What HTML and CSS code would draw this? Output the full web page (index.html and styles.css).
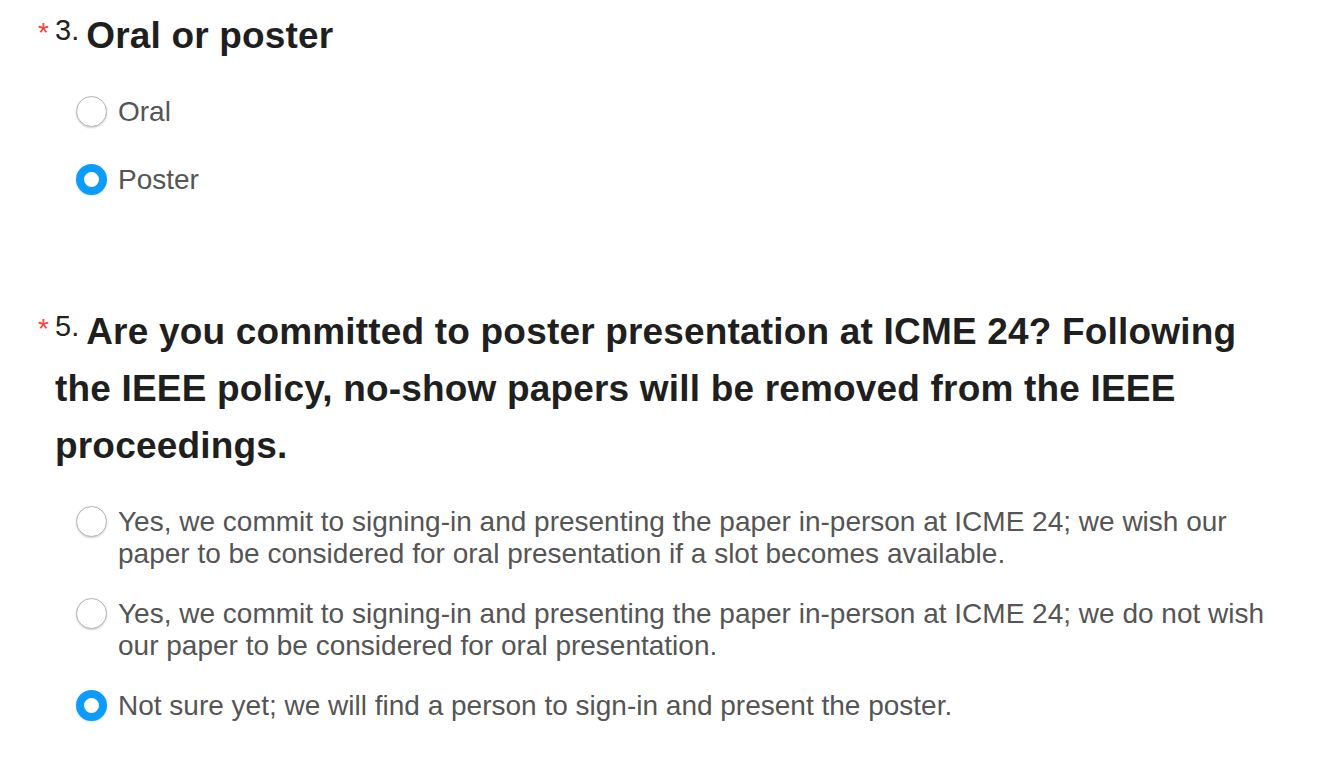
FILE: index.html
```html
<!DOCTYPE html>
<html>
<head>
<meta charset="utf-8">
<link rel="stylesheet" href="styles.css">
</head>
<body>
<div class="question q3">
  <div class="qtitle"><span class="req">*</span><span class="num">3.</span><span class="text">Oral or poster</span></div>
  <div class="options">
    <label class="opt"><span class="radio"></span><span class="label">Oral</span></label>
    <label class="opt"><span class="radio checked"></span><span class="label">Poster</span></label>
  </div>
</div>
<div class="question q5">
  <div class="qtitle"><span class="req">*</span><span class="num">5.</span><span class="text">Are you committed to poster presentation at ICME 24? Following the IEEE policy, no-show papers will be removed from the IEEE proceedings.</span></div>
  <div class="options">
    <label class="opt"><span class="radio"></span><span class="label">Yes, we commit to signing-in and presenting the paper in-person at ICME 24; we wish our paper to be considered for oral presentation if a slot becomes available.</span></label>
    <label class="opt"><span class="radio"></span><span class="label">Yes, we commit to signing-in and presenting the paper in-person at ICME 24; we do not wish our paper to be considered for oral presentation.</span></label>
    <label class="opt"><span class="radio checked"></span><span class="label">Not sure yet; we will find a person to sign-in and present the poster.</span></label>
  </div>
</div>
</body>
</html>
```

FILE: styles.css
```css
html, body {
  margin: 0;
  padding: 0;
  background: #fff;
}
body {
  font-family: "Liberation Sans", Arial, sans-serif;
  padding: 7px 0 0 55px;
}
.question {
  width: 1232px;
}
.q5 {
  margin-top: 107px;
}
.qtitle {
  position: relative;
  font-size: 37px;
  line-height: 57px;
  color: #1f1f1f;
}
.req {
  position: absolute;
  left: -17px;
  top: 12px;
  color: #ff3d3d;
  font-size: 28px;
  line-height: 28px;
}
.num {
  font-size: 29px;
  line-height: 29px;
  vertical-align: 8px;
  margin-right: 7px;
  color: #222;
}
.text {
  font-weight: bold;
  letter-spacing: 0.18px;
}
.options {
  margin: 0 0 0 21px;
  padding-top: 32px;
  display: flex;
  flex-direction: column;
  gap: 28px;
}
.q3 .options {
  gap: 36px;
}
.opt {
  display: flex;
  align-items: flex-start;
  gap: 11px;
  font-size: 28px;
  line-height: 32px;
  color: #555;
}
.radio {
  flex: none;
  width: 31px;
  height: 31px;
  box-sizing: border-box;
  border-radius: 50%;
  border: 1px solid #b5b5b5;
  box-shadow: 0 1px 2px rgba(0,0,0,0.18);
  background: #fff;
  margin-top: 0;
}
.radio.checked {
  border: 8px solid #0c9cff;
  box-shadow: 0 1px 2px rgba(0,0,0,0.12);
}
```
